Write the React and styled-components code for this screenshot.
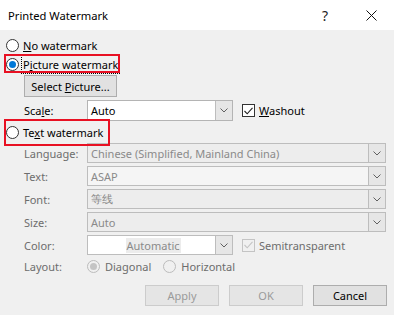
import styled, { createGlobalStyle } from "styled-components";

const Global = createGlobalStyle`
  body {
    margin: 0;
    font-family: "Noto Sans", "Liberation Sans", sans-serif;
    font-size: 11px;
    color: #000;
  }
`;

const Window = styled.div`
  width: 394px;
  height: 315px;
  background: #f0f0f0;
  display: flex;
  flex-direction: column;
  overflow: hidden;
`;

const TitleBar = styled.div`
  height: 30px;
  background: #fff;
  display: flex;
  align-items: center;
  padding-left: 8px;
  flex-shrink: 0;
`;

const Title = styled.span`
  flex: 1;
  font-size: 11.2px;
`;

const TitleButton = styled.span`
  width: 46px;
  display: flex;
  justify-content: center;
  font-size: 14px;
  color: #222;
`;

const Content = styled.div`
  display: flex;
  flex-direction: column;
  padding: 8px 7px 0 6px;
`;

const RadioRow = styled.label`
  position: relative;
  display: inline-flex;
  align-self: flex-start;
  align-items: center;
  gap: ${(p) => p.gap || "4px"};
  height: 14px;
  margin-top: ${(p) => p.mt || "0"};
  color: ${(p) => (p.disabled ? "#6d6d6d" : "#000")};
`;

const RadioCircle = styled.span`
  width: 11px;
  height: 11px;
  border-radius: 50%;
  border: 1px solid ${(p) => (p.disabled ? "#bcbcbc" : "#333")};
  background: ${(p) => (p.disabled ? "#f0f0f0" : "#fff")};
  display: flex;
  align-items: center;
  justify-content: center;
  flex-shrink: 0;
  &::after {
    content: "";
    display: ${(p) => (p.checked ? "block" : "none")};
    width: 7px;
    height: 7px;
    border-radius: 50%;
    background: ${(p) => (p.disabled ? "#c4c4c4" : "#0078d7")};
  }
`;

const Focus = styled.span`
  outline: 1px dotted #000;
  outline-offset: 1px;
`;

const Highlight = styled.span`
  position: absolute;
  top: ${(p) => p.top};
  bottom: ${(p) => p.bottom};
  left: -2px;
  right: ${(p) => p.right};
  border: 2px solid #e81123;
  pointer-events: none;
`;

const Button = styled.button`
  font-family: inherit;
  font-size: 11px;
  height: ${(p) => p.h || "21px"};
  width: ${(p) => p.w || "74px"};
  padding: 0;
  background: ${(p) => (p.disabled ? "#e5e5e5" : "#e1e1e1")};
  border: 1px solid ${(p) => (p.disabled ? "#cccccc" : "#adadad")};
  color: ${(p) => (p.disabled ? "#9a9a9a" : "#000")};
  margin-left: ${(p) => p.ml || "0"};
  margin-top: ${(p) => p.mt || "0"};
  align-self: flex-start;
`;

const FieldRow = styled.div`
  display: flex;
  align-items: center;
  height: ${(p) => p.h || "20px"};
  margin-top: ${(p) => p.mt || "3px"};
  padding-left: 18px;
`;

const Label = styled.span`
  width: 63px;
  flex-shrink: 0;
  color: ${(p) => (p.disabled ? "#6d6d6d" : "#000")};
`;

const Combo = styled.div`
  display: flex;
  height: 100%;
  width: ${(p) => p.w || "299px"};
  box-sizing: border-box;
  border: 1px solid ${(p) => (p.disabled ? "#bdbdbd" : "#b4b4b4")};
  background: ${(p) => p.bg || "#fff"};
`;

const ComboText = styled.span`
  flex: 1;
  display: flex;
  align-items: center;
  justify-content: ${(p) => (p.center ? "center" : "flex-start")};
  padding-left: 3px;
  color: ${(p) => (p.disabled ? "#8a8a8a" : "#000")};
  white-space: nowrap;
  overflow: hidden;
`;

const Selected = styled.span`
  background: #ececec;
  padding: 0 1px;
`;

const DropButton = styled.span`
  width: 16px;
  border-left: 1px solid #bdbdbd;
  background: #e6e6e6;
  display: flex;
  align-items: center;
  justify-content: center;
`;

const Check = styled.span`
  display: inline-flex;
  align-items: center;
  gap: 4px;
  margin-left: 9px;
  color: ${(p) => (p.disabled ? "#6d6d6d" : "#000")};
`;

const CheckBox = styled.span`
  width: 11px;
  height: 11px;
  border: 1px solid ${(p) => (p.disabled ? "#c4c4c4" : "#333")};
  background: ${(p) => (p.disabled ? "#f0f0f0" : "#fff")};
  display: flex;
  align-items: center;
  justify-content: center;
`;

const Options = styled.div`
  display: flex;
  gap: 12px;
`;

const Footer = styled.div`
  display: flex;
  justify-content: flex-end;
  gap: 10px;
  margin-top: 12px;
`;

const Chevron = () => (
  <svg width="8" height="5" viewBox="0 0 8 5">
    <path d="M0.5 0.5 L4 4 L7.5 0.5" fill="none" stroke="#606060" strokeWidth="1" />
  </svg>
);

const Tick = ({ color }) => (
  <svg width="9" height="8" viewBox="0 0 9 8">
    <path d="M0.5 4 L3.2 6.8 L8.5 0.8" fill="none" stroke={color} strokeWidth="1.1" />
  </svg>
);

const Select = ({ value, w, disabled, bg, center }) => (
  <Combo w={w} disabled={disabled} bg={bg}>
    <ComboText disabled={disabled} center={center}>
      {center ? <Selected>{value}</Selected> : value}
    </ComboText>
    <DropButton>
      <Chevron />
    </DropButton>
  </Combo>
);

export default function App() {
  return (
    <>
      <Global />
      <Window>
        <TitleBar>
          <Title>Printed Watermark</Title>
          <TitleButton>?</TitleButton>
          <TitleButton>
            <svg width="11" height="11" viewBox="0 0 11 11">
              <path d="M0.5 0.5 L10.5 10.5 M10.5 0.5 L0.5 10.5" stroke="#111" strokeWidth="1" />
            </svg>
          </TitleButton>
        </TitleBar>
        <Content>
          <RadioRow>
            <RadioCircle />
            <span>
              <u>N</u>o watermark
            </span>
          </RadioRow>
          <RadioRow mt="5px">
            <RadioCircle checked />
            <Focus>
              P<u>i</u>cture watermark
            </Focus>
            <Highlight top="-3px" bottom="-2px" right="-2px" />
          </RadioRow>
          <Button w="93px" h="22px" ml="18px" mt="4px">
            Select <u>P</u>icture...
          </Button>
          <FieldRow h="21px" mt="3px">
            <Label>
              Sca<u>l</u>e:
            </Label>
            <Select value="Auto" w="146px" />
            <Check>
              <CheckBox>
                <Tick color="#222" />
              </CheckBox>
              <span>
                <u>W</u>ashout
              </span>
            </Check>
          </FieldRow>
          <RadioRow mt="4px">
            <RadioCircle />
            <span>
              Te<u>x</u>t watermark
            </span>
            <Highlight top="-6px" bottom="-7px" right="-7px" />
          </RadioRow>
          <FieldRow mt="4px">
            <Label disabled>Language:</Label>
            <Select value="Chinese (Simplified, Mainland China)" disabled bg="#ededed" />
          </FieldRow>
          <FieldRow>
            <Label disabled>Text:</Label>
            <Select value="ASAP" disabled bg="#f5f5f5" />
          </FieldRow>
          <FieldRow>
            <Label disabled>Font:</Label>
            <Select value="等线" disabled bg="#ededed" />
          </FieldRow>
          <FieldRow>
            <Label disabled>Size:</Label>
            <Select value="Auto" disabled bg="#ededed" />
          </FieldRow>
          <FieldRow>
            <Label disabled>Color:</Label>
            <Select value="Automatic" w="146px" disabled center />
            <Check disabled>
              <CheckBox disabled>
                <Tick color="#c4c4c4" />
              </CheckBox>
              <span>Semitransparent</span>
            </Check>
          </FieldRow>
          <FieldRow h="14px" mt="4px">
            <Label disabled>Layout:</Label>
            <Options>
              <RadioRow disabled gap="5px">
                <RadioCircle disabled checked />
                <span>Diagonal</span>
              </RadioRow>
              <RadioRow disabled gap="5px">
                <RadioCircle disabled />
                <span>Horizontal</span>
              </RadioRow>
            </Options>
          </FieldRow>
          <Footer>
            <Button disabled>Apply</Button>
            <Button disabled>OK</Button>
            <Button>Cancel</Button>
          </Footer>
        </Content>
      </Window>
    </>
  );
}
